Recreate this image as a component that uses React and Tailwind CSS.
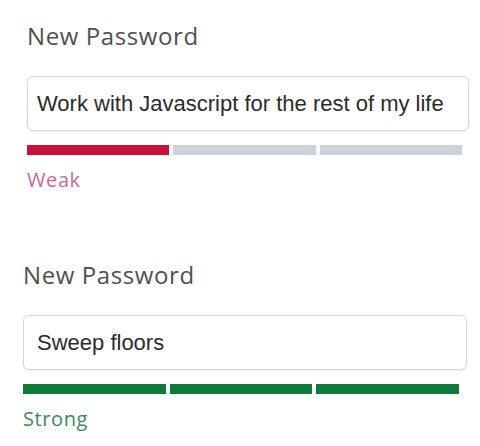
import React from 'react'

function StrengthField({ value, level, className, barsClass, inputPad }) {
  const strong = level === 'strong'
  return (
    <div className={className}>
      <div className="text-[24px] leading-[32px] tracking-[0.6px] text-[#505050] font-['Open_Sans',sans-serif]">New Password</div>
      <div className={`mt-[24px] h-[55px] flex items-center rounded-[6px] border border-[#d8d8d8] bg-white shadow-[0_1px_2px_rgba(0,0,0,0.08)] ${inputPad}`}>
        <span className="text-[22px] text-[#2b2b2b] font-['Liberation_Sans',Arial,sans-serif]">{value}</span>
      </div>
      <div className={`mt-[14px] flex gap-[4px] h-[10px] ${barsClass}`}>
        <div className={`flex-1 ${strong ? 'bg-[#0e7a37]' : 'bg-[#c8103a]'}`} />
        <div className={`flex-1 ${strong ? 'bg-[#0e7a37]' : 'bg-[#cdd3da]'}`} />
        <div className={`flex-1 ${strong ? 'bg-[#0e7a37]' : 'bg-[#cdd3da]'}`} />
      </div>
      <div className={`mt-[13px] text-[20px] leading-[24px] tracking-[0.6px] font-['Open_Sans',sans-serif] ${strong ? 'text-[#3b8a5c]' : 'text-[#c8689a]'}`}>
        {strong ? 'Strong' : 'Weak'}
      </div>
    </div>
  )
}

export default function App() {
  return (
    <div className="w-[480px] h-[446px] bg-white overflow-hidden">
      <StrengthField
        value="Work with Javascript for the rest of my life"
        level="weak"
        className="pt-[20px] pl-[27px] pr-[11px]"
        barsClass="mr-[7px]"
        inputPad="pl-[9px]"
      />
      <StrengthField
        value="Sweep floors"
        level="strong"
        className="mt-[67px] pl-[23px] pr-[13px]"
        barsClass="mr-[8px]"
        inputPad="pl-[13px]"
      />
    </div>
  )
}
